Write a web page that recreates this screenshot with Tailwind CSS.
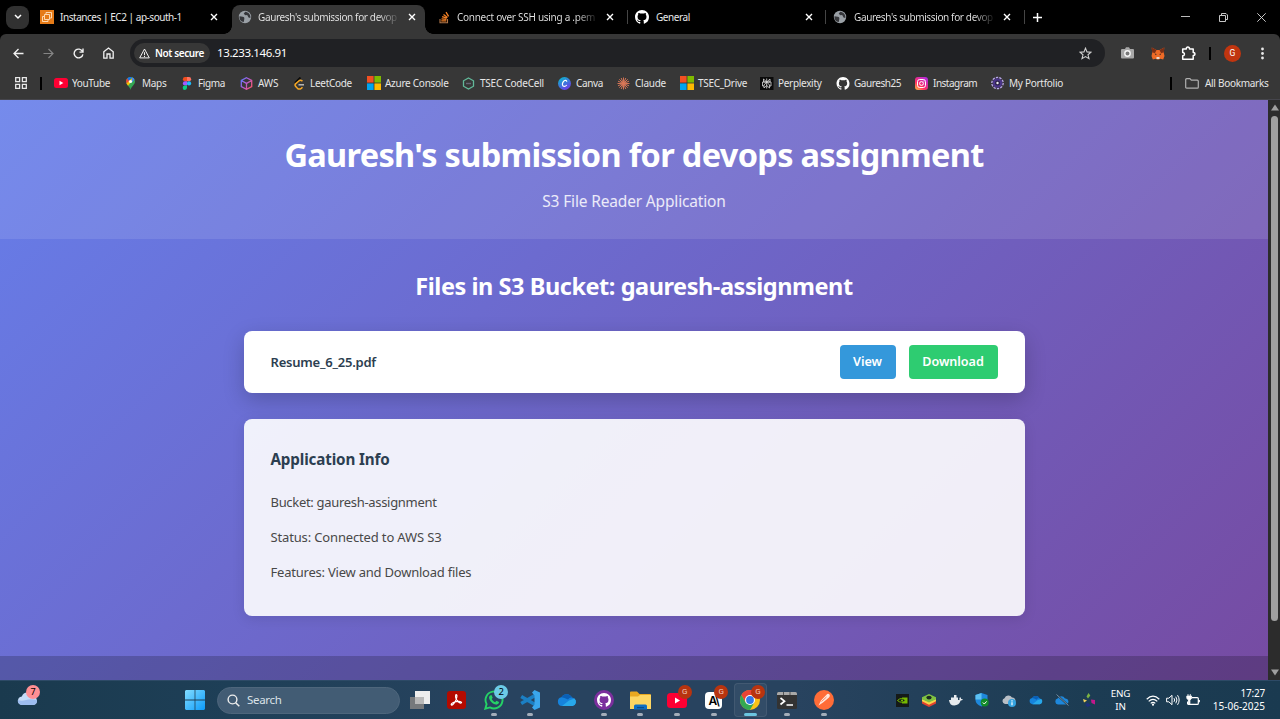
<!DOCTYPE html>
<html lang="en">
<head>
<meta charset="utf-8">
<title>Gauresh's submission for devops assignment</title>
<script src="https://cdn.jsdelivr.net/npm/@tailwindcss/browser@4"></script>
</head>
<body class="w-[1280px] h-[719px] overflow-hidden flex flex-col bg-black font-['Noto_Sans','Open_Sans',sans-serif] text-white">

<!-- shared symbols -->
<svg class="hidden">
  <symbol id="x" viewBox="0 0 8 8"><path d="M1 1l6 6M7 1L1 7" stroke="#fff" stroke-width="1.4" fill="none"/></symbol>
  <symbol id="globe" viewBox="0 0 14 14"><circle cx="7" cy="7" r="6.2" fill="#9aa0a6"/><path d="M1.500 6.200l3.200.6c1.600.3 1.800 1 1.600 2.100L5.800 12C3 11.600 1.200 9.400 1.500 6.200zM7.200 1.800l-1.500 2 1.700 1.500 1.800-.2 1.300 2.300 1.800.6C13 5 10.600 2.200 7.200 1.800z" fill="#35363a"/></symbol>
  <symbol id="gh" viewBox="0 0 16 16"><path d="M8 0C3.58 0 0 3.58 0 8c0 3.54 2.29 6.53 5.47 7.59.4.07.55-.17.55-.38v-1.49c-2.010.370-2.530-.490-2.690-.940-.090-.230-.480-.940-.820-1.130-.280-.150-.680-.520-.010-.530.630-.010 1.080.580 1.230.820.720 1.210 1.870.870 2.330.660.070-.520.280-.870.510-1.070-1.780-.200-3.640-.890-3.640-3.950 0-.870.310-1.590.820-2.150-.080-.200-.360-1.020.080-2.120 0 0 .670-.210 2.200.820a7.600 7.600 0 014 0c1.530-1.040 2.200-.820 2.200-.820.440 1.100.160 1.920.080 2.120.510.560.820 1.270.820 2.150 0 3.070-1.870 3.750-3.650 3.950.290.250.540.730.540 1.480v2.190c0 .210.150.460.550.380A8.010 8.010 0 0016 8c0-4.420-3.580-8-8-8z" fill="#fff"/></symbol>
  <symbol id="ms" viewBox="0 0 14 14"><path d="M0 0h6.600v6.600H0z" fill="#f25022"/><path d="M7.400 0H14v6.600H7.400z" fill="#7fba00"/><path d="M0 7.400h6.600V14H0z" fill="#00a4ef"/><path d="M7.400 7.400H14V14H7.400z" fill="#ffb900"/></symbol>
  <symbol id="cloud" viewBox="0 0 20 14"><path d="M5 13a4.400 4.400 0 01-.6-8.700A6 6 0 0115 4.600 4.300 4.300 0 0115.500 13z" fill="#1683dc"/><path d="M4.400 4.300A6 6 0 0115 4.600c-1.600-.2-3 .6-4 1.900L7.500 5z" fill="#0a5fb5"/><path d="M5 13l7-5.500 5.500-2A4.300 4.300 0 0115.500 13z" fill="#28a8ea"/></symbol>
</svg>

<!-- tab strip -->
<header class="h-[34px] shrink-0 flex items-center bg-black text-[10px] text-[#e8e8e8]">
  <div class="w-8 pl-[6px] shrink-0"><div class="w-[23px] h-[23px] rounded-[8px] bg-[#313131] flex items-center justify-center"><svg class="w-2 h-[6px]" viewBox="0 0 8 6"><path d="M1 1l3 3 3-3" stroke="#fff" stroke-width="1.500" fill="none"/></svg></div></div>
  <div class="w-[200px] shrink-0 pl-2 flex items-center">
    <svg class="w-[14px] h-[14px]" viewBox="0 0 14 14"><path d="M0 0h14v14H0z" fill="#e57b18"/><path d="M6 2.500h5.500V8H10M6 2.500V4M4.500 4.500H9.500v5h-5zM4 6.500H2.500v5H8V10" stroke="#ffe3c2" stroke-width=".9" fill="none"/></svg>
    <span class="ml-[6px] w-[149px] whitespace-nowrap tracking-[-0.46px]">Instances | EC2 | ap-south-1</span>
    <svg class="ml-px w-2 h-2"><use href="#x"/></svg>
  </div>
  <div class="relative w-[193px] h-[29px] self-end shrink-0 pl-[6px] pb-[5px] flex items-center bg-[#373737] rounded-t-[8px]">
    <div class="absolute -left-2 bottom-0 w-2 h-2 bg-[radial-gradient(circle_at_0_0,#000_7.500px,#373737_8px)]"></div>
    <div class="absolute -right-2 bottom-0 w-2 h-2 bg-[radial-gradient(circle_at_100%_0,#000_7.500px,#373737_8px)]"></div>
    <svg class="w-[14px] h-[14px]"><use href="#globe"/></svg>
    <span class="ml-[6px] w-[150px] whitespace-nowrap tracking-[-0.37px] bg-linear-to-r from-[#e8e8e8] from-80% to-transparent to-95% bg-clip-text text-transparent">Gauresh's submission for devop</span>
    <svg class="w-2 h-2"><use href="#x"/></svg>
  </div>
  <div class="w-[202px] shrink-0 pl-[13px] flex items-center">
    <svg class="w-[13px] h-[13px]" viewBox="0 0 13 13"><path d="M2 8v3.800h7.500V8" stroke="#b0764a" stroke-width="1.100" fill="none"/><path d="M3.300 9.800h5M3.500 7.800l4.900.6M4.100 5.700l4.700 1.500M5.500 3.400l4 3M8 1.200l2.600 4.200" stroke="#f48024" stroke-width="1.300"/></svg>
    <span class="ml-[6px] w-[149px] whitespace-nowrap tracking-[-0.28px] bg-linear-to-r from-[#e8e8e8] from-80% to-transparent to-95% bg-clip-text text-transparent">Connect over SSH using a .pem</span>
    <svg class="w-2 h-2"><use href="#x"/></svg>
  </div>
  <div class="w-[198px] shrink-0 flex items-center border-l border-[#454545] h-[14px]">
    <svg class="ml-[7px] w-[14px] h-[14px]"><use href="#gh"/></svg>
    <span class="ml-[7px] w-[149px] tracking-[-0.41px]">General</span>
    <svg class="w-2 h-2"><use href="#x"/></svg>
  </div>
  <div class="w-[200px] shrink-0 flex items-center border-x border-[#454545] h-[14px]">
    <svg class="ml-[7px] w-[14px] h-[14px]"><use href="#globe"/></svg>
    <span class="ml-[7px] w-[149px] whitespace-nowrap tracking-[-0.37px] bg-linear-to-r from-[#e8e8e8] from-80% to-transparent to-95% bg-clip-text text-transparent">Gauresh's submission for devop</span>
    <svg class="w-2 h-2"><use href="#x"/></svg>
  </div>
  <svg class="ml-2 w-[9px] h-[9px]" viewBox="0 0 9 9"><path d="M4.500 0v9M0 4.500h9" stroke="#fff" stroke-width="1.500"/></svg>
  <div class="ml-auto mr-[14px] flex items-center gap-[29px]">
    <svg class="w-[9px] h-[9px]" viewBox="0 0 9 9"><path d="M0 3.500h9" stroke="#bbb"/></svg>
    <svg class="w-[9px] h-[9px]" viewBox="0 0 9 9"><path d="M.5 2.500h6v6h-6zM2.500 2V.5H7L8.500 2v4.500H7" stroke="#ddd" stroke-width=".9" fill="none"/></svg>
    <svg class="w-[9px] h-[9px]" viewBox="0 0 9 9"><path d="M.3.3l8.400 8.400M8.700.3L.3 8.700" stroke="#ddd" stroke-width=".9"/></svg>
  </div>
</header>

<!-- toolbar -->
<div class="h-[37px] shrink-0 flex items-center bg-[#373737] rounded-t-[6px] pt-px">
  <div class="w-[130px] shrink-0 pl-[13px] flex items-center gap-[19px]">
    <svg class="w-[11px] h-[11px]" viewBox="0 0 11 11"><path d="M10.500 5.500H1M5.500 1L1 5.500 5.500 10" stroke="#f1f1f1" stroke-width="1.300" fill="none"/></svg>
    <svg class="w-[11px] h-[11px]" viewBox="0 0 11 11"><path d="M.5 5.500H10M5.500 1L10 5.500 5.500 10" stroke="#858585" stroke-width="1.200" fill="none"/></svg>
    <svg class="w-[11px] h-[11px]" viewBox="0 0 11 11"><path d="M9.500 3.500A4.400 4.400 0 109.900 6.300M10 .6v3.500H6.500" stroke="#f1f1f1" stroke-width="1.400" fill="none"/></svg>
    <svg class="w-[11px] h-[12px]" viewBox="0 0 11 12"><path d="M.8 4.700L5.500 1l4.700 3.700v6.500H7V7H4v4.200H.8z" stroke="#f1f1f1" stroke-width="1.300" fill="none"/></svg>
  </div>
  <div class="w-[975px] h-7 shrink-0 rounded-full bg-[#202124] flex items-center pl-1">
    <div class="w-[76px] h-5 rounded-full bg-[#373737] flex items-center pl-[5px] gap-[5px]">
      <svg class="w-[11px] h-[11px]" viewBox="0 0 11 11"><path d="M5.500 1l4.800 8.900H.7zM5.500 4.200v3M5.500 8v1" stroke="#f1f1f1" stroke-width="1" fill="none"/></svg>
      <span class="text-[10px] font-semibold tracking-[-0.39px] whitespace-nowrap">Not secure</span>
    </div>
    <span class="ml-[7px] text-[11.500px] tracking-[-0.39px]">13.233.146.91</span>
    <svg class="ml-auto mr-[13px] w-[13px] h-[13px]" viewBox="0 0 13 13"><path d="M6.500 1.200l1.500 3.700 4 .3L9 7.800l1 3.900-3.500-2.100L3 11.700l1-3.900-3-2.600 4-.3z" stroke="#d0d0d0" stroke-width="1.100" fill="none"/></svg>
  </div>
  <div class="flex items-center pl-4">
    <svg class="w-[13px] h-3" viewBox="0 0 13 12"><path d="M1 2h3l1-1.700h3L9 2h3q1 0 1 1v7.500q0 1-1 1H1q-1 0-1-1V3q0-1 1-1z" fill="#a8a8a8"/><circle cx="6.500" cy="6.500" r="2.700" fill="#777" stroke="#f6f6f6" stroke-width="1.400"/></svg>
    <svg class="ml-[17px] w-[14px] h-[13px]" viewBox="0 0 14 13"><path d="M.7.500L5.500 3h3L13.300.500l-.5 5.500.7 3-1.300 3.500-3-.8-1.200.9H6l-1.200-.9-3 .8L.500 9l.7-3z" fill="#ee6a26"/><path d="M.7.500L5.500 3 4 6 1.200 5.500zM13.300.500L8.500 3 10 6l2.800-.5z" fill="#7c2f16"/><path d="M3.500 6.500l2 .5-.5 1.200zM10.500 6.500l-2 .5.5 1.200z" fill="#222"/><path d="M5.500 10h3v2h-3z" fill="#e9d9cf"/></svg>
    <svg class="ml-4 w-[15px] h-[15px]" viewBox="0 0 15 15"><path d="M1.700 3h3.600c0-2.600 3.200-2.600 3.200 0h3.700v3.600c2.400 0 2.400 3 0 3v3.700H1.700V9.800c2.300 0 2.300-3.200 0-3.200z" stroke="#fff" stroke-width="1.500" fill="none" stroke-linejoin="round"/></svg>
    <div class="ml-[13px] w-[2px] h-[13px] bg-black"></div>
    <div class="ml-[13px] w-[17px] h-[17px] rounded-full bg-[#c1350f] flex items-center justify-center text-[8.500px] font-['Roboto']">G</div>
    <svg class="ml-5 w-[3px] h-[13px]" viewBox="0 0 3 13"><circle cx="1.500" cy="2" r="1.400" fill="#e8e8e8"/><circle cx="1.500" cy="6.500" r="1.400" fill="#e8e8e8"/><circle cx="1.500" cy="11" r="1.400" fill="#e8e8e8"/></svg>
  </div>
</div>

<!-- bookmarks -->
<nav class="h-[29px] shrink-0 flex items-center pb-1 bg-[#373737] border-b border-[#45454c] text-[10px] text-[#e6e6e6] whitespace-nowrap *:shrink-0">
  <div class="w-[54px] pl-[15px] flex items-center">
    <svg class="w-3 h-3" viewBox="0 0 12 12"><path d="M.7.7h3.900v3.900H.7zM7.400.7h3.900v3.900H7.400zM.7 7.400h3.900v3.900H.7zM7.400 7.400h3.900v3.900H7.400z" stroke="#e8e8e8" stroke-width="1.300" fill="none"/></svg>
    <div class="ml-[13px] w-[2px] h-[13px] bg-black"></div>
  </div>
  <div class="w-[70px] flex items-center gap-[4px] tracking-[-0.35px]"><svg class="w-[14px] h-[10px]" viewBox="0 0 14 10"><rect width="14" height="10" rx="2.500" fill="#ff0033"/><path d="M5.500 2.800v4.400L9.300 5z" fill="#fff"/></svg>YouTube</div>
  <div class="w-[56px] flex items-center gap-[4px] tracking-[-0.28px]"><svg class="w-[14px] h-[13px]" viewBox="0 0 14 13"><path d="M6.500 13C6 9.500 2 8 2 4.500A4.500 4.500 0 0111 4.500C11 8 7 9.500 6.500 13z" fill="#34a853"/><path d="M2.500 6.500C1.500 4 2.500 2 3.300 1.300L6 4z" fill="#ea4335"/><path d="M3.300 1.300A4.500 4.500 0 018 .3L5 4z" fill="#1a73e8"/><path d="M2.500 6.500L8 1l2 1-6 6.700z" fill="#fbbc04"/><path d="M8 .3a4.500 4.500 0 012.500 2L7.500 6z" fill="#4285f4"/><circle cx="6.500" cy="4.500" r="1.600" fill="#fff"/></svg>Maps</div>
  <div class="w-[60px] flex items-center gap-[4px] tracking-[-0.38px]"><svg class="w-[14px] h-[13px]" viewBox="0 0 14 13"><path d="M7 0H5a2.150 2.150 0 000 4.300h2z" fill="#f24e1e"/><path d="M7 0h2a2.150 2.150 0 010 4.300H7z" fill="#ff7262"/><path d="M7 4.300H5a2.150 2.150 0 000 4.300h2z" fill="#a259ff"/><circle cx="9" cy="6.450" r="2.150" fill="#1abcfe"/><path d="M7 8.600H5A2.150 2.150 0 107 10.800z" fill="#0acf83"/></svg>Figma</div>
  <div class="w-[52px] flex items-center gap-[4px] tracking-[-0.2px]"><svg class="w-[14px] h-[13px]" viewBox="0 0 14 13"><defs><linearGradient id="aw" x2="1" y2=".7"><stop stop-color="#4d7dff"/><stop offset=".5" stop-color="#b05bd8"/><stop offset="1" stop-color="#f0567a"/></linearGradient></defs><path d="M6.500.7l5.200 2.800v6L6.500 12.300 1.300 9.500v-6zM1.300 3.500l5.200 2.900 5.200-2.900M6.500 6.400v5.900" stroke="url(#aw)" stroke-width="1.300" fill="none"/></svg>AWS</div>
  <div class="w-[75px] flex items-center gap-[4px] tracking-[-0.29px]"><svg class="w-[14px] h-[13px]" viewBox="0 0 14 13"><path d="M8.500.5L3 6" stroke="#0c0c0c" stroke-width="2"/><path d="M10.500 4.200q-2.300-1.900-4 0L3.800 6.600q-1.500 1.500 0 3l1.600 1.700q1.800 1.500 3.900 0l1.200-1.100" stroke="#f5a623" stroke-width="1.500" fill="none"/><path d="M6.500 7.800H12" stroke="#c3c3c3" stroke-width="1.400"/></svg>LeetCode</div>
  <div class="w-[95px] flex items-center gap-[4px] tracking-[-0.27px]"><svg class="w-[14px] h-[14px]"><use href="#ms"/></svg>Azure Console</div>
  <div class="w-[96px] flex items-center gap-[4px] tracking-[-0.22px]"><svg class="w-[14px] h-[13px]" viewBox="0 0 14 13"><path d="M6.500 1l5 2.800v5.400l-5 2.800-5-2.800V3.800z" stroke="#62b99a" stroke-width="1.300" fill="none"/><path d="M4 6.500h5" stroke="#667" stroke-width="1.400"/></svg>TSEC CodeCell</div>
  <div class="w-[59px] flex items-center gap-[4px] tracking-[-0.36px]"><svg class="w-[14px] h-[13px]" viewBox="0 0 14 13"><defs><linearGradient id="cv" y2="1" x2=".6"><stop stop-color="#00c4cc"/><stop offset="1" stop-color="#6a3de8"/></linearGradient></defs><circle cx="6.500" cy="6.500" r="6.500" fill="url(#cv)"/><path d="M8.700 4.700q0-1.500-1.300-1.400C5.600 3.500 4.300 5.700 4.400 7.500c.1 2.600 3 2.400 4.300.5" stroke="#fff" stroke-width="1.200" fill="none"/></svg>Canva</div>
  <div class="w-[63px] flex items-center gap-[4px] tracking-[-0.25px]"><svg class="w-[14px] h-[13px]" viewBox="0 0 14 13"><path d="M6.500.5v12M.5 6.500h12M2.300 2.300l8.400 8.400M10.700 2.300l-8.400 8.400M4.200 1l4.600 11M8.800 1L4.200 12M1 4.200l11 4.600M12 4.200L1 8.800" stroke="#d97757" stroke-width=".95"/></svg>Claude</div>
  <div class="w-[80px] flex items-center gap-[4px] tracking-[-0.31px]"><svg class="w-[14px] h-[14px]"><use href="#ms"/></svg>TSEC_Drive</div>
  <div class="w-[76px] flex items-center gap-[4px] tracking-[-0.31px]"><svg class="w-[14px] h-[13px]" viewBox="0 0 14 13"><path d="M0 0h13.500v13H0z" fill="#0a0a0a"/><path d="M6.700 1.500v10M3.500 2l3.200 3L10 2v3H3.500zM2.500 5h8.500v4H9.500M2.500 5v4H4M6.700 5L4 8v3l2.700-2.500L9.500 11V8z" stroke="#ddd" stroke-width=".8" fill="none"/></svg>Perplexity</div>
  <div class="w-[79px] flex items-center gap-[4px] tracking-[-0.45px]"><svg class="w-[14px] h-[13px]"><use href="#gh"/></svg>Gauresh25</div>
  <div class="w-[76px] flex items-center gap-[4px] tracking-[-0.5px]"><svg class="w-[14px] h-[13px]" viewBox="0 0 14 13"><defs><linearGradient id="ig" y1="1" x2=".8" y2="0"><stop stop-color="#ffc83d"/><stop offset=".4" stop-color="#ff2f63"/><stop offset="1" stop-color="#b42be0"/></linearGradient></defs><rect width="13" height="13" rx="3" fill="url(#ig)"/><rect x="2.500" y="2.500" width="8" height="8" rx="2.200" stroke="#fff" fill="none"/><circle cx="6.500" cy="6.500" r="1.900" stroke="#fff" fill="none"/><circle cx="8.900" cy="4.100" r=".5" fill="#fff"/></svg>Instagram</div>
  <div class="w-[179px] flex items-center gap-[4px] tracking-[-0.28px]"><svg class="w-[14px] h-[14px]" viewBox="0 0 14 14"><circle cx="6.500" cy="7" r="4.800" fill="#4a3488"/><circle cx="6.500" cy="7" r="5.700" stroke="#b9a8e8" stroke-width="1.300" stroke-dasharray="2.400 1.100" fill="none"/><circle cx="6.500" cy="7" r="2.500" fill="#2b2148"/><circle cx="6.500" cy="7" r="1.200" fill="#eee"/></svg>My Portfolio</div>
  <div class="w-[2px] h-[13px] bg-black"></div>
  <div class="ml-[13px] flex items-center gap-[6px] tracking-[-0.3px]"><svg class="w-[14px] h-[11px]" viewBox="0 0 14 11"><path d="M.7 1.700q0-1 1-1h3.200l1.400 1.500h6q1 0 1 1v6q0 1-1 1H1.700q-1 0-1-1z" stroke="#b0b0b0" stroke-width="1.200" fill="none"/></svg>All Bookmarks</div>
</nav>

<!-- page and scrollbar -->
<div class="h-[580px] shrink-0 flex">
  <main class="w-[1268px] h-full overflow-hidden bg-[linear-gradient(135deg,#667eea_0%,#764ba2_100%)] flex flex-col">
    <div class="h-[139px] shrink-0 bg-white/10 flex flex-col items-center">
      <h1 class="mt-[32px] h-[46px] leading-[46px] text-[32.500px] font-bold tracking-[-0.68px] whitespace-nowrap">Gauresh's submission for devops assignment</h1>
      <p class="mt-[10px] leading-[26px] text-[15.500px] tracking-[-0.16px] text-white/85">S3 File Reader Application</p>
    </div>
    <section class="h-[417px] shrink-0 w-[781px] mx-auto flex flex-col">
      <h2 class="mt-[30px] h-[34px] leading-[34px] text-center text-[23.500px] font-bold tracking-[-0.450px] whitespace-nowrap">Files in S3 Bucket: gauresh-assignment</h2>
      <div class="mt-[28px] h-[62px] rounded-[8px] bg-white shadow-[0_7px_21px_rgba(0,0,0,0.2)] flex items-center px-[27px]">
        <span class="text-[13px] font-semibold text-[#2c3e50] tracking-[-0.22px] pt-px">Resume_6_25.pdf</span>
        <span class="ml-auto w-14 h-[34px] rounded-[4px] bg-[#3498db] flex items-center justify-center text-[12.600px] font-semibold tracking-[-0.02px] pt-px">View</span>
        <span class="ml-[13px] w-[89px] h-[34px] rounded-[4px] bg-[#2ecc71] flex items-center justify-center text-[12.600px] font-semibold tracking-[-0.04px] pt-px">Download</span>
      </div>
      <div class="mt-[26px] h-[197px] rounded-[8px] bg-white/90 shadow-[0_3px_13px_rgba(0,0,0,0.1)] px-[27px] flex flex-col">
        <h3 class="mt-[29px] leading-[22px] text-[15.200px] font-bold text-[#2c3e50] tracking-[-0.14px]">Application Info</h3>
        <div class="mt-[21px] text-[13px] leading-[22px] flex flex-col gap-[13px] text-[#484848]">
          <p class="tracking-[-0.31px]">Bucket: gauresh-assignment</p>
          <p class="tracking-[-0.15px]">Status: Connected to AWS S3</p>
          <p class="tracking-[-0.22px]">Features: View and Download files</p>
        </div>
      </div>
    </section>
    <footer class="h-6 shrink-0 bg-black/20"></footer>
  </main>
  <aside class="w-3 bg-[#2c2c2c] flex flex-col items-center justify-between py-[4px]">
    <svg class="ml-px w-2 h-[7px]" viewBox="0 0 8 7"><path d="M4 .5L8 6.500H0z" fill="#9f9f9f"/></svg>
    <div class="ml-px mb-auto mt-[5px] w-[7px] h-[505px] rounded-full bg-[#9f9f9f]"></div>
    <svg class="ml-px w-2 h-[7px]" viewBox="0 0 8 7"><path d="M4 6.500L8 .5H0z" fill="#9f9f9f"/></svg>
  </aside>
</div>

<!-- taskbar -->
<footer class="h-[39px] shrink-0 bg-[linear-gradient(90deg,#1a3a4e_0%,#1e3f57_18%,#28435f_40%,#28435f_62%,#1c3c53_85%,#1a3a50_100%)] border-t border-[#2d4a66] flex items-center">
  <div class="relative w-[185px] h-full shrink-0 pl-[17px] pt-[8px]">
    <svg class="w-[21px] h-[17px]" viewBox="0 0 21 17"><path d="M4.500 16a4.300 4.300 0 01.3-8.500A6 6 0 0116 7.200 4.500 4.500 0 0116.500 16z" fill="#c5dbf8"/><path d="M4.500 16a4.300 4.300 0 01-3.700-5q4 1.500 8.200 0t11 0a4.500 4.500 0 01-3.500 5z" fill="#9dbdf0"/></svg>
    <div class="absolute left-[26px] top-[4px] w-[14px] h-[14px] rounded-full bg-[#ff8f94] text-black text-[9px] leading-[14px] text-center">7</div>
  </div>
  <svg class="w-5 h-5 shrink-0" viewBox="0 0 20 20"><defs><linearGradient id="wn" x2="1" y2="1"><stop stop-color="#82dcff"/><stop offset="1" stop-color="#0c9bfa"/></linearGradient></defs><path d="M1 0h8.600v9.600H0V1zM10.400 0H19l1 1v8.600h-9.600zM0 10.400h9.600V20H1l-1-1zM10.400 10.400H20V19l-1 1h-8.600z" fill="url(#wn)"/></svg>
  <div class="ml-3 w-[183px] h-[27px] shrink-0 rounded-full bg-[#425c74] border border-[#4e667c] flex items-center pl-[9px]">
    <svg class="w-[13px] h-[13px]" viewBox="0 0 13 13"><circle cx="5.500" cy="5.500" r="4.400" stroke="#eee" stroke-width="1.400" fill="none"/><path d="M8.700 8.700l3.600 3.600" stroke="#eee" stroke-width="1.500"/></svg>
    <span class="ml-[7px] text-[11.500px] tracking-[-0.30px] text-[#dbe2e8]">Search</span>
  </div>
  <div class="ml-[2px] w-[440px] h-full shrink-0 grid grid-cols-12">
    <div class="flex items-center justify-center"><svg class="w-5 h-[18px]" viewBox="0 0 20 18"><path d="M0 6h14v12H0z" fill="#76797c"/><path d="M5 0h15v13H5z" fill="#eee"/><path d="M5 6h9v7H5z" fill="#b9b9b9"/></svg></div>
    <div class="flex items-center justify-center"><svg class="w-[19px] h-[18px]" viewBox="0 0 19 18"><rect width="19" height="18" rx="3" fill="#b30b00"/><path d="M9 3.500c1.800 0 .8 4-.8 7-1.200 2.300-3.500 4.500-4 3.300C3.800 12 9 10.200 12 10.400c3 .2 3.200 1.800 1.500 1.700C11 11.800 7.300 6.500 9 3.500z" stroke="#fff" stroke-width="1.100" fill="none"/></svg></div>
    <div class="relative flex items-center justify-center"><svg class="w-5 h-5" viewBox="0 0 20 20"><path d="M1.300 18.700l1.300-4.600a8.500 8.500 0 113.300 3.300z" stroke="#25d366" stroke-width="1.900" fill="none"/><path d="M6 5.500l1.500-.5 1.200 2.700-1 1.300c.8 1.600 2 2.600 3.500 3.200l1.200-1.400 2.600 1.300c.1 1.700-1.400 2.700-3 2.500C8.500 14 5.300 10.500 5 7.500c0-.8.400-1.500 1-2z" fill="#25d366"/></svg><div class="absolute left-[19px] top-[4px] w-[14px] h-[14px] rounded-full bg-[#6ccbe6] text-black text-[9.500px] leading-[13px] text-center">2</div><div class="absolute bottom-[3px] w-[6px] h-[3px] rounded-full bg-[#a3adba]"></div></div>
    <div class="relative flex items-center justify-center"><svg class="w-5 h-5" viewBox="0 0 20 20"><path d="M15 5.500L1.200 13.500M15 14.500L1.200 6.500" stroke="#1b7fc4" stroke-width="3.600"/><path d="M14.500 0L20 2.500v15L14.500 20 12 17.500l2.500-3V5.500l-2.500-3z" fill="#3aa6ec"/></svg><div class="absolute bottom-[3px] w-[6px] h-[3px] rounded-full bg-[#a3adba]"></div></div>
    <div class="flex items-center justify-center"><svg class="w-5 h-[14px]"><use href="#cloud"/></svg></div>
    <div class="relative flex items-center justify-center"><div class="w-5 h-5 rounded-full bg-[#7b2f9d] flex items-center justify-center"><svg class="w-[14px] h-[14px]"><use href="#gh"/></svg></div><div class="absolute bottom-[3px] w-[6px] h-[3px] rounded-full bg-[#a3adba]"></div></div>
    <div class="relative flex items-center justify-center"><svg class="w-[21px] h-[19px]" viewBox="0 0 21 19"><path d="M0 1.500Q0 .5 1 .5h6L9.500 3H20q1 0 1 1v13q0 1-1 1H1q-1 0-1-1z" fill="#e9a820"/><path d="M0 5.500h8L10 4h11v14H0z" fill="#fdd663"/><path d="M4 18.500V15q0-1.500 1.500-1.500h10Q17 13.500 17 15v3.500z" fill="#0f6fc4"/><path d="M7 16h7v1.200H7z" fill="#0b4a87"/></svg><div class="absolute bottom-[3px] w-[6px] h-[3px] rounded-full bg-[#a3adba]"></div></div>
    <div class="relative flex items-center justify-center"><svg class="w-5 h-[15px]" viewBox="0 0 20 15"><rect width="20" height="15" rx="3.500" fill="#ff0033"/><path d="M8 4.500v6l5-3z" fill="#fff"/></svg><div class="absolute left-[19px] top-[4px] w-[14px] h-[14px] rounded-full bg-[#b8340f] text-[#f2c9bb] text-[8px] leading-[14px] text-center font-['Roboto']">G</div><div class="absolute bottom-[3px] w-[6px] h-[3px] rounded-full bg-[#a3adba]"></div></div>
    <div class="relative flex items-center justify-center"><div class="w-[17px] h-[17px] rounded-[4px] bg-white text-black text-[12px] leading-[17px] font-semibold text-center tracking-[-1px] font-['Inter']">A\</div><div class="absolute left-[19px] top-[4px] w-[14px] h-[14px] rounded-full bg-[#b8340f] text-[#f2c9bb] text-[8px] leading-[14px] text-center font-['Roboto']">G</div><div class="absolute bottom-[3px] w-[6px] h-[3px] rounded-full bg-[#a3adba]"></div></div>
    <div class="relative flex items-center justify-center"><div class="absolute left-[2px] top-[2px] w-[33px] h-[34px] rounded-[4px] bg-white/5 border border-white/8"></div><svg class="relative w-5 h-5" viewBox="0 0 20 20"><circle cx="10" cy="10" r="10" fill="#fbc116"/><path d="M1.340 5A10 10 0 0118.660 5H10L5.670 12.500z" fill="#ea4335"/><path d="M1.340 5A10 10 0 0010 20l4.330-7.500L10 14l-4.330-1.500z" fill="#34a853"/><circle cx="10" cy="10" r="5" fill="#fff"/><circle cx="10" cy="10" r="3.900" fill="#3478e8"/></svg><div class="absolute left-[19px] top-[4px] w-[14px] h-[14px] rounded-full bg-[#b8340f] text-[#f2c9bb] text-[8px] leading-[14px] text-center font-['Roboto']">G</div><div class="absolute bottom-[3px] w-[13px] h-[3px] rounded-full bg-[#6cc5e0]"></div></div>
    <div class="relative flex items-center justify-center"><svg class="w-5 h-[17px]" viewBox="0 0 20 17"><rect width="20" height="17" rx="1.500" fill="#333"/><path d="M0 1.500Q0 0 1.500 0h17Q20 0 20 1.500V3H0z" fill="#a9a9a9"/><path d="M6.500 0v3M13 0v3" stroke="#555"/><path d="M3.500 6l4 3.200-4 3.300M9.500 13H16" stroke="#fff" stroke-width="1.700" fill="none"/></svg><div class="absolute bottom-[3px] w-[6px] h-[3px] rounded-full bg-[#a3adba]"></div></div>
    <div class="relative flex items-center justify-center"><svg class="w-5 h-5" viewBox="0 0 20 20"><circle cx="10" cy="10" r="10" fill="#ff6c37"/><path d="M15.500 4.500a2 2 0 00-3 .3L7 10.500l-2.500 5 4.500-3 6-5q1.500-1.500.5-3z" fill="#ffe9df"/><path d="M7.500 11.500l5-4.500" stroke="#ff6c37" stroke-width=".8"/></svg><div class="absolute bottom-[3px] w-[6px] h-[3px] rounded-full bg-[#a3adba]"></div></div>
  </div>
  <div class="ml-[47px] w-[213.500px] shrink-0 grid grid-cols-8 items-center justify-items-center">
    <svg class="w-[13px] h-[13px]" viewBox="0 0 13 13"><path d="M0 0h13v13H0z" fill="#151a18"/><path d="M6 3.500h5.500v6H6z" fill="#76b900"/><path d="M1.500 6.500Q5.500 2.500 9.500 6.500 5.500 10 1.500 6.500z" stroke="#76b900" fill="#151a18"/><circle cx="6" cy="6.500" r="1.100" fill="#76b900"/></svg>
    <svg class="w-[14px] h-[13px]" viewBox="0 0 14 13"><path d="M0 7l7 2.500L14 7v2.500L7 13 0 9.500z" fill="#e2412e"/><path d="M0 5l7 2.500L14 5v2.300L7 10.800 0 7.300z" fill="#f9d54a"/><path d="M0 3.300L7 0l7 3.300v2L7 8.600 0 5.300z" fill="#7fc241"/><ellipse cx="7" cy="3.600" rx="2.600" ry="1.900" fill="#1d2b22"/></svg>
    <svg class="w-[14px] h-3" viewBox="0 0 14 12"><path d="M0 6h10.500q-.5-2 .6-3 1 .8 1.100 2 1.300-.1 1.800.6-.8 1-2.300 1Q10 11.500 5.300 11.500.5 11.500 0 6zM2 3.500h7V6H2zM5 1h2.500v3H5z" fill="#e6eaee"/></svg>
    <svg class="w-[14px] h-[14px]" viewBox="0 0 14 14"><path d="M6.500 0L12.500 2v5q0 4-6 6.500Q.5 11 .5 7V2z" fill="#1e88dc"/><path d="M6.500 0v6.500H.5V2z" fill="#5cc1f2"/><circle cx="9.700" cy="9.500" r="4" fill="#128a28"/><path d="M7.800 9.500l1.500 1.500 2.300-2.600" stroke="#fff" fill="none"/></svg>
    <svg class="w-[14px] h-[13px]" viewBox="0 0 14 13"><path d="M3 10A3 3 0 012.500 4.200 4.200 4.200 0 0110 3.500 3 3 0 0112 9l-2 1z" fill="#b9bfc6"/><circle cx="10" cy="9" r="4" fill="#35a3e0"/><path d="M10 8.200v3M10 6.300v1.100" stroke="#fff" stroke-width="1.200"/></svg>
    <svg class="w-[14px] h-[10px]"><use href="#cloud"/></svg>
    <svg class="w-[14px] h-3" viewBox="0 0 14 12"><path d="M3 10.500a3 3 0 01-.4-5.900A4.200 4.200 0 0110 4.500a3 3 0 01.8 6z" fill="#1e88dc"/><path d="M1.500.5l12 11" stroke="#1c3c53" stroke-width="1.800"/><path d="M1.500.5l12 11" stroke="#8fa2b2" stroke-width=".8"/></svg>
    <svg class="w-3 h-[14px]" viewBox="0 0 12 14"><path d="M5.500 0l1.800 2.500L5 5.500 3.500 3.500z" fill="#7cb342"/><path d="M0 6l4 1.500L1 9.500z" fill="#f6d55c"/><path d="M12 7v4.500L8.500 10 8 6.500z" fill="#c2188b"/><path d="M4.500 9.500L8 12.500 4.500 14 2 12z" fill="#1d2f7d"/></svg>
  </div>
  <div class="ml-[8px] w-5 text-center text-[9.800px] leading-[13.500px] tracking-[-0.15px]">ENG<br>IN</div>
  <div class="ml-[15px] flex items-center gap-[6px]">
    <svg class="w-[14px] h-[11px]" viewBox="0 0 14 11"><path d="M.7 4.200q6.300-6 12.600 0M2.700 6.400q4.300-4 8.600 0M4.700 8.400q2.300-2 4.600 0" stroke="#fff" stroke-width="1.200" fill="none"/><circle cx="7" cy="9.700" r="1.100" fill="#fff"/></svg>
    <svg class="w-[14px] h-[12px]" viewBox="0 0 14 12"><path d="M.6 4.200h2.200L6 1.300v9.400L2.800 7.800H.6zM8 4.200q1.300 1.800 0 3.600M9.800 2.700q2.300 3.300 0 6.600M11.500 1.200q3.300 4.800 0 9.600" stroke="#fff" fill="none"/></svg>
    <svg class="w-[14px] h-[12px]" viewBox="0 0 14 12"><path d="M6 3.600h5.300q1 0 1 1v4.800q0 1-1 1H2.600q-1 0-1-1V7.500M13.300 6v2.300" stroke="#fff" stroke-width="1.200" fill="none"/><path d="M2 0v2M4.300 0v2M.8 2h4.800v2.500L3.900 6v4.300H2.500V6L.8 4.500z" fill="#fff" stroke="#fff" stroke-width=".8"/></svg>
  </div>
  <div class="ml-auto mr-[15px] text-right text-[10px] leading-[13.500px] whitespace-nowrap"><span class="tracking-[-0.2px]">17:27</span><br>15-06-2025</div>
</footer>
</body>
</html>
